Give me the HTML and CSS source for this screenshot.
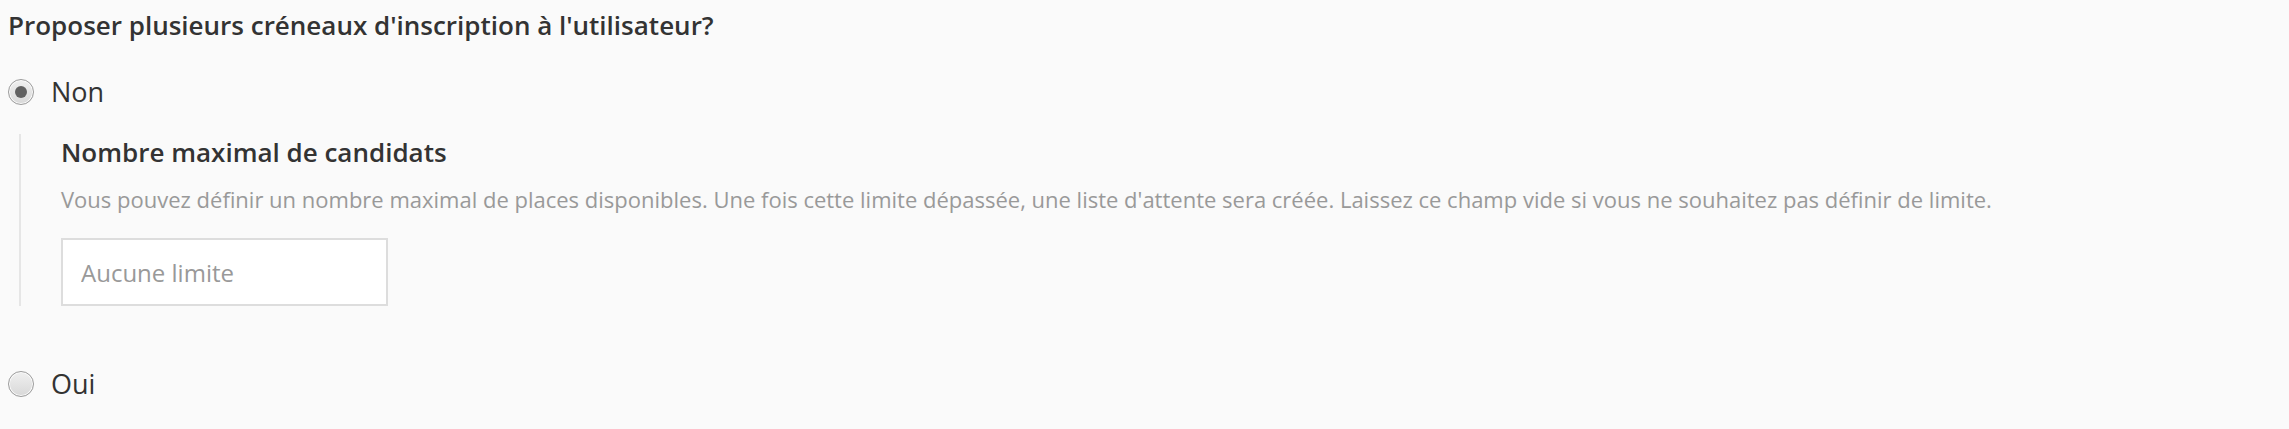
FILE: index.html
```html
<!DOCTYPE html>
<html lang="fr">
<head>
<meta charset="utf-8">
<title>Créneaux</title>
<link rel="stylesheet" href="styles.css">
</head>
<body>
<div class="form">
  <div class="question">Proposer plusieurs créneaux d'inscription à l'utilisateur?</div>
  <label class="option option-non">
    <span class="radio checked"></span>
    <span class="option-label">Non</span>
  </label>
  <div class="sub">
    <div class="sub-title">Nombre maximal de candidats</div>
    <div class="sub-desc">Vous pouvez définir un nombre maximal de places disponibles. Une fois cette limite dépassée, une liste d'attente sera créée. Laissez ce champ vide si vous ne souhaitez pas définir de limite.</div>
    <input class="limit-input" type="text" placeholder="Aucune limite">
  </div>
  <label class="option option-oui">
    <span class="radio"></span>
    <span class="option-label">Oui</span>
  </label>
</div>
</body>
</html>
```

FILE: styles.css
```css
html, body {
  margin: 0;
  padding: 0;
  background: #fafafa;
}
body {
  font-family: "Open Sans", "Liberation Sans", sans-serif;
  color: #333333;
}
.form {
  padding: 7px 8px 0 8px;
}
.question {
  font-size: 26px;
  font-weight: 600;
  line-height: 36px;
}
.option {
  display: flex;
  align-items: center;
  font-size: 27px;
  line-height: 36px;
}
.option-non {
  margin-top: 31px;
}
.option-oui {
  margin-top: 60px;
}
.radio {
  box-sizing: border-box;
  width: 26px;
  height: 26px;
  margin-left: 0;
  margin-right: 17px;
  border-radius: 50%;
  border: 1px solid #9c9c9c;
  background: linear-gradient(#f0f0f0, #d8d8d8);
  box-shadow: inset 0 0 0 1px #fbfbfb;
  display: flex;
  align-items: center;
  justify-content: center;
}
.radio.checked::after {
  content: "";
  width: 12px;
  height: 12px;
  border-radius: 50%;
  background: #616161;
}
.sub {
  margin-top: 24px;
  margin-left: 11px;
  border-left: 2px solid #e6e6e6;
  padding-left: 40px;
  padding-bottom: 0;
}
.sub-title {
  font-size: 26px;
  font-weight: 600;
  line-height: 36px;
}
.sub-desc {
  margin-top: 14px;
  font-size: 22px;
  line-height: 30px;
  color: #999999;
}
.limit-input {
  display: block;
  box-sizing: border-box;
  margin-top: 24px;
  width: 327px;
  height: 68px;
  border: 2px solid #dddddd;
  background: #ffffff;
  padding: 0 18px;
  font-family: "Open Sans", "Liberation Sans", sans-serif;
  font-size: 24px;
  color: #333333;
  outline: none;
}
.limit-input::placeholder {
  color: #999999;
  opacity: 1;
}
```
